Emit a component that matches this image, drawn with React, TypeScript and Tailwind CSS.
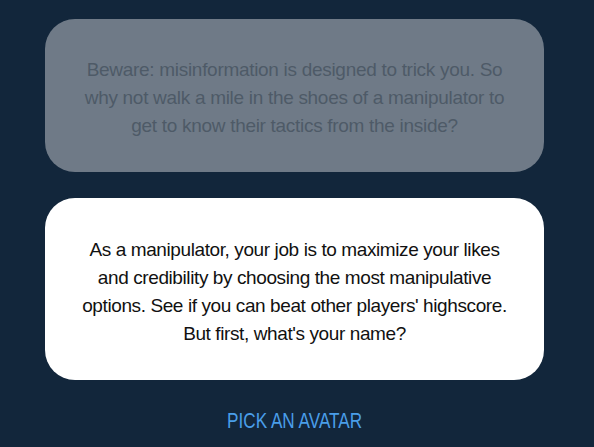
export default function App() {
  return (
    <div
      className="w-[594px] h-[447px] bg-[#12263b] flex flex-col items-start pt-[19px] pl-[45px]"
      style={{ fontFamily: '"Liberation Sans", Arial, sans-serif' }}
    >
      <div className="w-[499px] h-[153px] rounded-[30px] bg-[#6f7a87] flex flex-col items-center pt-[37px]">
        <p className="text-[19px] leading-[28px] tracking-[-0.3px] text-center text-[#4e5a67] whitespace-nowrap">
          Beware: misinformation is designed to trick you. So
          <br />
          why not walk a mile in the shoes of a manipulator to
          <br />
          get to know their tactics from the inside?
        </p>
      </div>
      <div className="mt-[26px] w-[499px] h-[182px] rounded-[30px] bg-white flex flex-col items-center pt-[38px]">
        <p className="text-[19px] leading-[28px] tracking-[-0.4px] text-center text-[#111111] whitespace-nowrap">
          As a manipulator, your job is to maximize your likes
          <br />
          and credibility by choosing the most manipulative
          <br />
          options. See if you can beat other players' highscore.
          <br />
          But first, what's your name?
        </p>
      </div>
      <div className="mt-[28px] w-[499px] flex justify-center">
        <span className="inline-block text-[22px] leading-[26px] text-[#4a9ee9] scale-x-[0.78]">PICK AN AVATAR</span>
      </div>
    </div>
  );
}
